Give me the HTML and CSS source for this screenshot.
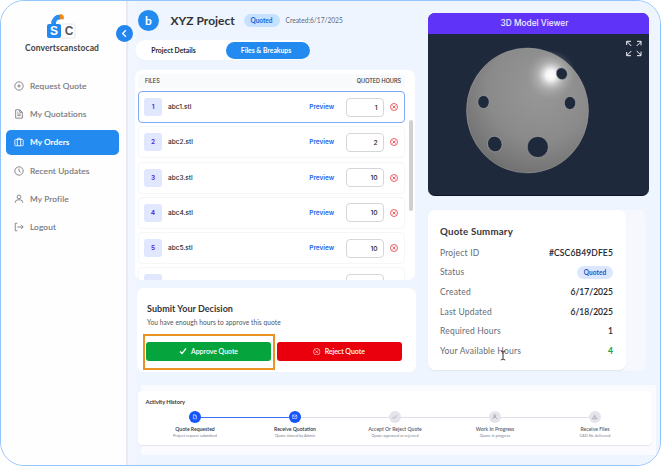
FILE: index.html
```html
<!DOCTYPE html>
<html lang="en">
<head>
<meta charset="utf-8">
<title>XYZ Project</title>
<link rel="stylesheet" href="styles.css">
</head>
<body>
<svg width="0" height="0" class="defs">
  <symbol id="reject" viewBox="0 0 16 16"><circle cx="8" cy="8" r="7"/><path d="M5 5l6 6M11 5l-6 6"/></symbol>
</svg>
<div class="frame">
  <aside class="sidebar">
    <div class="brand">
      <svg class="logo" viewBox="0 0 32 26">
        <path d="M16 10H27Q29 10 29 12V24H16" fill="#fff" stroke="#e4e4e8" stroke-width=".8"/>
        <path d="M7.500 11C7.500 5 9.500 3.300 14.500 3" fill="none" stroke="#2b8df2" stroke-width="4.800"/>
        <path d="M14 .4C17-.4 18.500 2 17.600 5.500L14 5z" fill="#f28b13"/>
        <rect x="1" y="10" width="14" height="14" rx="2" fill="#2389f1"/>
        <text x="8" y="21" fill="#fff">S</text><text x="23" y="21.200" fill="#57575a">C</text>
      </svg>
      <div class="brand-name">Convertscanstocad</div>
    </div>
    <button class="collapse"><svg viewBox="0 0 16 16"><path d="M9.700 4L5.700 8l4 4"/></svg></button>
    <nav class="nav">
      <a><svg viewBox="0 0 24 24"><circle cx="12" cy="12" r="10"/><path d="M12 8v8M8 12h8"/></svg><span>Request Quote</span></a>
      <a><svg viewBox="0 0 24 24"><path d="M14 2H4v20h16V8zM14 2v6h6M8 12h8M8 16h8M8 8h2"/></svg><span>My Quotations</span></a>
      <a class="active"><svg viewBox="0 0 24 24"><rect x="2" y="6" width="20" height="15" rx="2"/><path d="M8 21V4q0-1 1-1h6q1 0 1 1v17"/></svg><span>My Orders</span></a>
      <a><svg viewBox="0 0 24 24"><circle cx="12" cy="12" r="10"/><path d="M12 6v6l4 3"/></svg><span>Recent Updates</span></a>
      <a><svg viewBox="0 0 24 24"><circle cx="12" cy="7" r="4.500"/><path d="M3 21q0-7 6-7h6q6 0 6 7"/></svg><span>My Profile</span></a>
      <a><svg viewBox="0 0 24 24"><path d="M8 3H3v18h5M8 12h14M17 7l5 5-5 5"/></svg><span>Logout</span></a>
    </nav>
  </aside>

  <main class="main">
    <div class="columns">
      <section class="left">
        <header class="head">
          <span class="avatar">b</span><h1>XYZ Project</h1><span class="pill">Quoted</span><span class="created">Created:6/17/2025</span>
        </header>
        <div class="tabs"><span class="tab">Project Details</span><span class="tab on">Files &amp; Breakups</span></div>

        <div class="files">
          <div class="files-head"><span>FILES</span><span>QUOTED HOURS</span></div>
          <div class="row selected"><i>1</i><b>abc1.stl</b><a>Preview</a><span class="hours">1</span><svg><use href="#reject"/></svg></div>
          <div class="row"><i>2</i><b>abc2.stl</b><a>Preview</a><span class="hours">2</span><svg><use href="#reject"/></svg></div>
          <div class="row"><i>3</i><b>abc3.stl</b><a>Preview</a><span class="hours">10</span><svg><use href="#reject"/></svg></div>
          <div class="row"><i>4</i><b>abc4.stl</b><a>Preview</a><span class="hours">10</span><svg><use href="#reject"/></svg></div>
          <div class="row"><i>5</i><b>abc5.stl</b><a>Preview</a><span class="hours">10</span><svg><use href="#reject"/></svg></div>
          <div class="row"><i></i><b></b><span class="hours"></span><svg></svg></div>
          <div class="thumb"></div>
        </div>

        <div class="decision">
          <h2>Submit Your Decision</h2>
          <p>You have enough hours to approve this quote</p>
          <div class="actions">
            <button class="approve"><svg viewBox="0 0 16 16"><path d="M2 9l4 4 8-10"/></svg><span>Approve Quote</span></button>
            <button class="decline"><svg viewBox="0 0 16 16"><use href="#reject"/></svg><span>Reject Quote</span></button>
          </div>
          <div class="highlight"></div>
        </div>
      </section>

      <section class="right">
        <div class="viewer">
          <div class="viewer-head">3D Model Viewer</div>
          <svg class="scene" viewBox="0 0 221 162">
            <defs>
              <radialGradient id="body" gradientUnits="userSpaceOnUse" cx="112" cy="56" r="103">
                <stop offset="0" stop-color="#989898"/><stop offset=".5" stop-color="#8a8a8a"/><stop offset=".8" stop-color="#747474"/><stop offset="1" stop-color="#505050"/>
              </radialGradient>
              <radialGradient id="shine" gradientUnits="userSpaceOnUse" cx="123" cy="41" r="25">
                <stop offset="0" stop-color="#fff"/><stop offset=".2" stop-color="#fff" stop-opacity=".9"/><stop offset=".55" stop-color="#ddd" stop-opacity=".35"/><stop offset="1" stop-color="#aaa" stop-opacity="0"/>
              </radialGradient>
            </defs>
            <ellipse cx="99.500" cy="76.500" rx="61" ry="62.500" fill="url(#body)" stroke="#a0a0a0" stroke-width=".5"/>
            <circle cx="123" cy="41" r="25" fill="url(#shine)" stroke="none"/>
            <g fill="#1e293b" stroke="#aaa" stroke-width=".6">
              <ellipse cx="133.800" cy="39.700" rx="5.500" ry="6" transform="rotate(-25 133.800 39.700)"/>
              <ellipse cx="55.500" cy="68" rx="5.700" ry="6.500"/>
              <ellipse cx="142" cy="69" rx="5.700" ry="6.500"/>
              <ellipse cx="66.800" cy="110" rx="7.200" ry="7.900" transform="rotate(-20 66.800 110)"/>
              <ellipse cx="109.800" cy="113" rx="10.600" ry="10.600"/>
            </g>
            <path class="expand" d="M203.300 12L199 7.700M198.700 11V7.300H203M208.700 12L213 7.700M209 7.300h4v4M203.300 17L199 21.300M198.700 18v3.700H203M208.700 17l4.300 4.300M209 21.700h4v-4"/>
          </svg>
        </div>
        <div class="summary-wrap">
          <div class="summary">
            <h2>Quote Summary</h2>
            <dl>
              <div><dt>Project ID</dt><dd class="pid">#CSC6B49DFE5</dd></div>
              <div><dt>Status</dt><dd><span class="pill small">Quoted</span></dd></div>
              <div><dt>Created</dt><dd>6/17/2025</dd></div>
              <div><dt>Last Updated</dt><dd>6/18/2025</dd></div>
              <div><dt>Required Hours</dt><dd>1</dd></div>
              <div><dt>Your Available Hours</dt><dd class="green">4</dd></div>
            </dl>
            <svg class="cursor" viewBox="0 0 6 10"><path d="M.8.6Q3 .6 3 2v6q0 1.400-2.200 1.400M5.200.6Q3 .6 3 2M3 8q0 1.400 2.200 1.400"/></svg>
          </div>
        </div>
      </section>
    </div>

    <div class="activity-band">
      <section class="activity">
        <h3>Activity History</h3>
        <ol>
          <li class="done"><span class="dot"><svg viewBox="0 0 16 16"><path d="M4 2h5l4 4v8H4zM9 2v4h4"/></svg></span><strong>Quote Requested</strong><small>Project request submitted</small></li>
          <li class="now"><span class="dot"><svg viewBox="0 0 16 16"><path d="M2 3h12v10H2zM2 4l6 5 6-5"/></svg></span><strong>Receive Quotation</strong><small>Quote shared by Admin</small></li>
          <li><span class="dot"><svg viewBox="0 0 16 16"><path d="M2 9l4 4 8-9"/></svg></span><strong>Accept Or Reject Quote</strong><small>Quote approved or rejected</small></li>
          <li><span class="dot"><svg viewBox="0 0 16 16"><circle cx="8" cy="5" r="3"/><path d="M2 14q1-5 6-5t6 5"/></svg></span><strong>Work In Progress</strong><small>Quote in progress</small></li>
          <li><span class="dot"><svg viewBox="0 0 16 16"><path d="M8 2v8M5 7l3 3 3-3M2 10v4h12v-4"/></svg></span><strong>Receive Files</strong><small>CAD file delivered</small></li>
        </ol>
      </section>
    </div>
  </main>
</div>
</body>
</html>
```
FILE: styles.css
```css
* { box-sizing: border-box; }
body { margin: 0; background: #fff; font-family: Lato, "Liberation Sans", sans-serif; color: #27272a; overflow: hidden; }
h1, h2, h3, p, dl, dd, ol { margin: 0; padding: 0; }
svg { fill: none; stroke: currentColor; stroke-width: 1.6; flex: none; }
span, strong, small, h1, h2, h3, p, dt, dd { white-space: nowrap; }
button { border: 0; padding: 0; font-family: inherit; }
.defs { position: absolute; }
.frame { width: 661px; height: 466px; border: 1px solid #93c5fd; border-radius: 24px; overflow: hidden; display: flex; background: #eef5ff; }

.sidebar { position: relative; width: 127px; flex: none; background: #fefefe; border-right: 2px solid #e9eaf1; padding: 13px 0 0 5px; }
.brand { height: 56px; display: flex; flex-direction: column; align-items: center; padding-right: 8px; }
.logo { width: 32px; height: 26px; margin-left: 0; stroke: none; }
.logo text { font: bold 12px "Liberation Sans", sans-serif; text-anchor: middle; }
.brand-name { font-size: 8.5px; line-height: 12px; margin-top: 2px; font-weight: bold; letter-spacing: .1px; color: #444; }
.collapse { position: absolute; left: 115px; top: 24px; width: 17px; height: 17px; border-radius: 50%; background: #2386ee; color: #fff; display: grid; place-items: center; }
.collapse svg { width: 13px; height: 13px; }
.nav { display: flex; flex-direction: column; gap: 3.200px; margin-top: 3.500px; }
.nav a { width: 112.500px; height: 25px; border-radius: 5px; display: flex; align-items: center; gap: 6px; padding-left: 8px; color: #73737a; font-size: 8.300px; letter-spacing: .14px; }
.nav svg { width: 10px; height: 10px; stroke-width: 2; }
.nav .active { background: #238af0; color: #fff; font-weight: bold; letter-spacing: 0; }
.nav a:not(.active) { -webkit-text-stroke: .12px; }

.main { flex: 1; min-width: 0; background: linear-gradient(90deg, #f3f6ff, #eef5ff 14px); padding: 8px 0 0 7px; }
.columns { display: flex; gap: 11.500px; height: 376px; }
.left { width: 281px; flex: none; }
.head { display: flex; align-items: center; height: 22px; padding-left: 3px; }
.avatar { width: 21px; height: 21px; border-radius: 50%; background: #238af0; color: #fff; font-size: 12px; line-height: 21px; text-align: center; font-weight: bold; }
h1 { font-size: 12px; font-weight: bold; letter-spacing: 0; width: 73px; margin-left: 11.500px; color: #333; }
.pill { width: 36px; height: 13px; line-height: 13px; text-align: center; border-radius: 7px; background: #c5e1ff; color: #1668cf; font-size: 6.500px; font-weight: bold; }
.created { font-size: 6.600px; margin-left: 6px; color: #626b78; letter-spacing: 0; }
.tabs { width: 176px; height: 20px; margin-top: 9px; border-radius: 10px; background: #fff; display: flex; align-items: center; box-shadow: 0 0 1px #dbe4ef; padding-left: 1px; }
.tab { width: 90px; padding-right: 15px; text-align: center; font-size: 6.800px; font-weight: bold; height: 17px; line-height: 16px; }
.tab.on { width: 84px; padding-right: 4px; border-radius: 9px; background: #238af0; color: #fff; }

.files { position: relative; width: 280px; height: 209.500px; margin-top: 10px; padding: 4px 10px 0 2.500px; border-radius: 7px; background: #fff; overflow: hidden; font-family: Inter, sans-serif; }
.files-head { height: 14px; margin-bottom: 3px; padding: 0 4px 0 7.500px; display: flex; justify-content: space-between; align-items: center; background: #f9fafb; font-size: 5.500px; color: #333; -webkit-text-stroke: .1px; }
.row { height: 32px; margin-bottom: 3.300px; border: 1px solid #f5f6f8; border-radius: 4px; display: flex; align-items: center; padding: 0 6.500px 0 5.500px; font-size: 6.700px; }
.row.selected { border-color: #80aaf8; }
.row i { width: 18px; height: 18px; line-height: 18px; border-radius: 3px; background: #e0e7ff; color: #5126dc; text-align: center; font-style: normal; font-weight: 600; font-size: 6.500px; }
.row b { flex: 1; font-weight: 500; margin-left: 6px; font-size: 6.500px; }
.row a { color: #2563eb; font-weight: 600; font-size: 6.400px; margin-right: 12px; }
.hours { width: 37.500px; height: 19px; line-height: 18px; border: 1px solid #d5d6da; border-radius: 4px; text-align: right; padding-right: 5px; font-size: 6.700px; font-weight: 500; }
.row svg { width: 8px; height: 8px; margin-left: 6px; color: #e52b32; stroke-width: 1.500; }
.thumb { position: absolute; right: 2px; top: 50px; width: 4px; height: 91px; border-radius: 2px; background: #cfd0d2; }

.decision { position: relative; width: 279.500px; height: 84px; margin: 8.500px 0 0 1.500px; border-radius: 7px; background: #fff; padding: 14px 14.500px 0 9.500px; }
h2 { font-size: 9px; line-height: 14px; font-weight: bold; letter-spacing: .04px; color: #35353a; }
.decision h2, .decision p { padding-left: 1px; }
.decision p { font-size: 6.600px; line-height: 10px; margin-top: 1px; color: #50545a; letter-spacing: .06px; }
.actions { display: flex; gap: 5.500px; margin-top: 15px; }
.actions button { width: 125px; height: 18.500px; border-radius: 3px; display: flex; align-items: center; justify-content: center; gap: 4px; color: #fff; font-size: 7px; font-weight: 600; letter-spacing: -.05px; }
.actions svg { width: 8px; height: 8px; }
.approve { background: #06a43c; }
.approve svg { stroke-width: 2.500; }
.decline { background: #e9000c; }
.decline svg { width: 7.500px; height: 7.500px; stroke-width: 1.300; }
.highlight { position: absolute; left: 6px; top: 46px; width: 132px; height: 36px; border: 2px solid #ea9224; }

.right { width: 221px; padding-top: 4px; }
.viewer { height: 183px; border-radius: 7px; overflow: hidden; background: #1e293b; border-bottom: 1px solid #0c1528; }
.viewer-head { background: #6034f8; color: #f2eeff; text-align: center; font: 500 8.300px/21px Inter, sans-serif; padding-right: 7px; }
.scene { display: block; width: 221px; height: 162px; }
.expand { stroke: #f5f7fa; stroke-width: 1; }
.summary-wrap { width: 218px; height: 161px; margin-top: 14px; border-radius: 7px; background: #f7f8fe; }
.summary { position: relative; width: 198px; height: 160px; border-radius: 7px; background: #fff; box-shadow: 0 1px 1px #e1e5eb; padding: 14px 12.500px 0; }
.summary h2 { font-size: 9.700px; letter-spacing: .2px; }
dl { margin-top: 5px; }
dl > div { height: 19.600px; display: flex; justify-content: space-between; align-items: center; font-size: 8.500px; }
dt { color: #656b75; letter-spacing: .2px; }
dd { color: #22252d; font-weight: 500; letter-spacing: .03px; -webkit-text-stroke: .1px; }
.pid { letter-spacing: .15px; }
.pill.small { display: block; background: #dbe7fe; color: #2353c4; font-size: 6.500px; -webkit-text-stroke: 0; }
.green { color: #16a34a; font-weight: bold; }
.cursor { position: absolute; left: 72px; top: 140px; width: 6px; height: 11px; stroke: #333; stroke-width: 1; }

.activity-band { width: 515px; height: 70px; margin-left: 6px; background: #fafaff; padding-top: 6px; }
.activity { width: 514px; height: 54px; margin-left: -3px; border-radius: 4px; background: #fff; box-shadow: 0 1px 1px #e4e4ec; padding: 7px 7.500px 0; }
h3 { font-size: 5.800px; line-height: 8px; font-weight: bold; color: #333745; letter-spacing: -.06px; }
ol { list-style: none; display: grid; grid-template-columns: repeat(5, 100px); margin: 5px 0 0 -.5px; }
li { position: relative; display: flex; flex-direction: column; align-items: center; color: #5b5e68; }
li:not(:last-child)::after { content: ""; position: absolute; left: 56px; top: 5.500px; width: 88px; height: 1px; background: #dedfe7; }
li.done::after { background: #3972f5 !important; }
.dot { width: 12px; height: 12px; border-radius: 50%; background: #e4e4eb; color: #83868f; display: grid; place-items: center; }
.dot svg { width: 5.500px; height: 5.500px; }
.done .dot, .now .dot { background: #1554fa; color: #fff; }
.done, .now { color: #30323a; }
strong { font-size: 5.100px; line-height: 7px; margin-top: 2.500px; font-weight: 600; }
small { font-size: 3.900px; line-height: 6px; color: #7c808a; }
```
